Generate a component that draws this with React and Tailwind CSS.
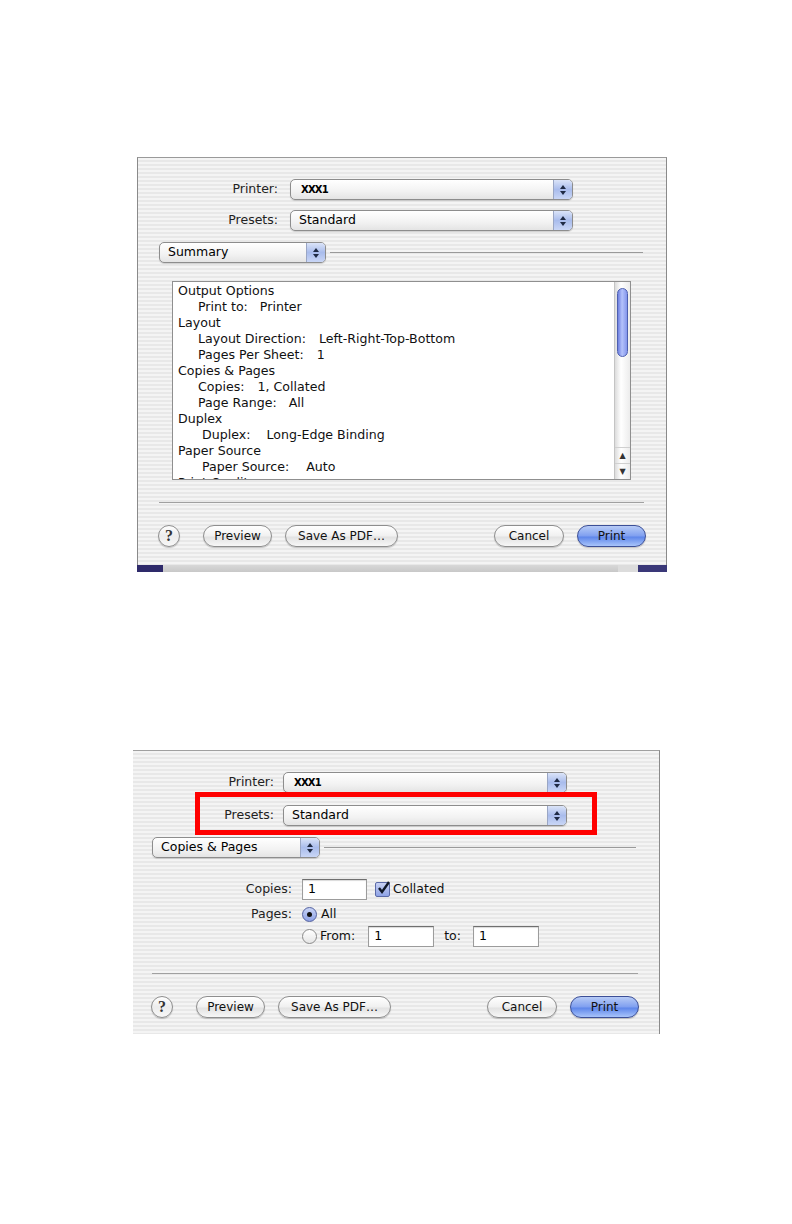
import React from "react";

const font = { fontFamily: '"DejaVu Sans", "Liberation Sans", sans-serif' };

const stripes =
  "bg-[image:repeating-linear-gradient(to_bottom,#f4f4f4_0px,#f4f4f4_2px,#e8e8e8_2px,#e8e8e8_4px)]";

const Arrows = ({ className = "" }) => (
  <svg width="8" height="12" viewBox="0 0 8 12" className={className}>
    <path d="M4 1 L7 5 L1 5 Z" fill="#1f2a44" />
    <path d="M1 7 L7 7 L4 11 Z" fill="#1f2a44" />
  </svg>
);

const Popup = ({ value, width, bold }) => (
  <div
    className="flex h-[21px] items-stretch rounded-[5px] border border-[#8d8d8d] bg-[linear-gradient(to_bottom,#ffffff,#f2f2f2_60%,#e4e4e4)] shadow-[0_1px_1px_rgba(0,0,0,0.15)]"
    style={{ width }}
  >
    <div
      className={`flex flex-1 items-center pl-[8px] text-black ${bold ? "text-[10px] font-bold tracking-[-0.8px] pl-[10px]" : "text-[12.5px]"}`}
    >
      {value}
    </div>
    <div className="flex w-[19px] items-center justify-center rounded-r-[4px] border-l border-[#9aa6c4] bg-[linear-gradient(to_bottom,#dbe4f8,#a9bcec_50%,#c9d6f6)]">
      <Arrows />
    </div>
  </div>
);

const Button = ({ children, width, primary }) => (
  <div
    className={`flex h-[22px] items-center justify-center rounded-full border text-[12px] text-[#111] shadow-[0_1px_1px_rgba(0,0,0,0.2)] ${
      primary
        ? "border-[#3c4f97] bg-[linear-gradient(to_bottom,#b7cbf6,#7f9ff0_50%,#5e86ea_55%,#a8c4fa)]"
        : "border-[#8e8e8e] bg-[linear-gradient(to_bottom,#ffffff,#f0f0f0_50%,#e2e2e2_55%,#f7f7f7)]"
    }`}
    style={{ width }}
  >
    {children}
  </div>
);

const Help = () => (
  <div className="flex h-[22px] w-[22px] items-center justify-center rounded-full border border-[#8e8e8e] bg-[linear-gradient(to_bottom,#ffffff,#ececec_50%,#f8f8f8)] text-[16px] font-bold text-[#333] shadow-[0_1px_1px_rgba(0,0,0,0.2)]" style={{ fontFamily: '"Liberation Serif", serif' }}>
    ?
  </div>
);

const ButtonRow = ({ left }) => (
  <div className="flex items-center" style={{ paddingLeft: left }}>
    <Help />
    <div className="ml-[23px]">
      <Button width={69}>Preview</Button>
    </div>
    <div className="ml-[13px]">
      <Button width={113}>Save As PDF…</Button>
    </div>
    <div className="ml-[96px]">
      <Button width={70}>Cancel</Button>
    </div>
    <div className="ml-[13px]">
      <Button width={69} primary>
        Print
      </Button>
    </div>
  </div>
);

const Label = ({ children, width }) => (
  <div className="text-right text-[12.5px] text-[#222]" style={{ width }}>
    {children}
  </div>
);

const Line = ({ head, children, indent = 20, label, gap = 12 }) =>
  head ? (
    <div className="h-[16px] leading-[16px]">{children}</div>
  ) : (
    <div className="h-[16px] leading-[16px]" style={{ paddingLeft: indent }}>
      {label}
      <span style={{ marginLeft: gap }}>{children}</span>
    </div>
  );

const Scrollbar = () => (
  <div className="flex w-[16px] flex-col border-l border-[#c4c4c4] bg-[linear-gradient(to_right,#dcdcdc,#ffffff_40%,#ececec)]">
    <div className="mx-auto mt-[6px] h-[69px] w-[11px] rounded-full border border-[#4d5fb0] bg-[linear-gradient(to_right,#6e80e0,#b4c2fb_45%,#8496ec)]" />
    <div className="flex-1" />
    <div className="flex h-[16px] items-center justify-center border-t border-[#d0d0d0] text-[8px] text-[#333]">▲</div>
    <div className="flex h-[16px] items-center justify-center border-t border-[#d0d0d0] text-[8px] text-[#333]">▼</div>
  </div>
);

const Checkbox = () => (
  <div className="relative h-[15px] w-[15px] rounded-[2px] border border-[#5b6aa8] bg-[linear-gradient(to_bottom,#c8d2f4,#8fa3e6)]">
    <svg width="15" height="15" viewBox="0 0 15 15" className="absolute left-[0px] top-[-2px]">
      <path d="M3 7 L6 11 L13 1" stroke="#101828" strokeWidth="2.4" fill="none" />
    </svg>
  </div>
);

const Radio = ({ on }) => (
  <div
    className={`flex h-[15px] w-[15px] items-center justify-center rounded-full border ${
      on
        ? "border-[#52609f] bg-[linear-gradient(to_bottom,#c9d4f6,#8ea2e5)]"
        : "border-[#8a8a8a] bg-[linear-gradient(to_bottom,#ffffff,#e6e6e6)]"
    }`}
  >
    {on && <div className="h-[5px] w-[5px] rounded-full bg-[#111]" />}
  </div>
);

const Field = ({ value, width }) => (
  <div
    className="flex h-[21px] items-center border border-[#9c9c9c] border-t-[#6f6f6f] bg-white pl-[5px] text-[12.5px] shadow-[inset_0_1px_1px_rgba(0,0,0,0.15)]"
    style={{ width }}
  >
    {value}
  </div>
);

const SummaryDialog = () => (
  <div className="ml-[137px] w-[530px]">
    <div className={`h-[408px] border-x border-t border-[#8a8a8a] border-t-[#9a9a9a] ${stripes}`}>
      <div className="mt-[21px] flex items-center">
        <Label width={140}>Printer:</Label>
        <div className="ml-[12px]">
          <Popup value="XXX1" width={283} bold />
        </div>
      </div>
      <div className="mt-[10px] flex items-center">
        <Label width={140}>Presets:</Label>
        <div className="ml-[12px]">
          <Popup value="Standard" width={283} />
        </div>
      </div>
      <div className="mt-[11px] flex items-center pl-[21px]">
        <Popup value="Summary" width={167} />
        <div className="ml-[4px] h-px w-[313px] bg-[#9a9a9a]" />
      </div>
      <div className="ml-[34px] mt-[18px] flex h-[199px] w-[459px] border border-[#8f8f8f] bg-white">
        <div className="flex-1 overflow-hidden pl-[5px] pt-[1px] text-[12.6px] text-[#111]">
          <Line head>Output Options</Line>
          <Line label="Print to:">Printer</Line>
          <Line head>Layout</Line>
          <Line label="Layout Direction:" gap={13}>Left-Right-Top-Bottom</Line>
          <Line label="Pages Per Sheet:" gap={13}>1</Line>
          <Line head>Copies &amp; Pages</Line>
          <Line label="Copies:" gap={13}>1, Collated</Line>
          <Line label="Page Range:" gap={12}>All</Line>
          <Line head>Duplex</Line>
          <Line label="Duplex:" indent={24} gap={16}>Long-Edge Binding</Line>
          <Line head>Paper Source</Line>
          <Line label="Paper Source:" indent={24} gap={17}>Auto</Line>
          <Line head>Print Quality</Line>
        </div>
        <Scrollbar />
      </div>
      <div className="ml-[21px] mt-[22px] h-px w-[485px] bg-[#a0a0a0]" />
      <div className="mt-[22px]">
        <ButtonRow left={20} />
      </div>
    </div>
    <div className="flex h-[7px]">
      <div className="w-[26px] bg-[#2e2a6a]" />
      <div className="flex-1 bg-[linear-gradient(to_bottom,#d8d8d8,#c8c8c8)]" />
      <div className="w-[20px] bg-[#dcdcdc]" />
      <div className="w-[29px] bg-[#3a3878]" />
    </div>
  </div>
);

const CopiesDialog = () => (
  <div className={`relative ml-[133px] mt-[178px] h-[284px] w-[527px] border-r border-t border-[#8a8a8a] border-t-[#a0a0a0] ${stripes}`}>
    <div className="mt-[21px] flex items-center">
      <Label width={141}>Printer:</Label>
      <div className="ml-[9px]">
        <Popup value="XXX1" width={284} bold />
      </div>
    </div>
    <div className="mt-[12px] flex items-center">
      <Label width={141}>Presets:</Label>
      <div className="ml-[9px]">
        <Popup value="Standard" width={284} />
      </div>
    </div>
    <div className="mt-[11px] flex items-center pl-[19px]">
      <Popup value="Copies & Pages" width={168} />
      <div className="ml-[4px] h-px w-[312px] bg-[#9a9a9a]" />
    </div>
    <div className="mt-[21px] flex items-center">
      <Label width={159}>Copies:</Label>
      <div className="ml-[10px]">
        <Field value="1" width={65} />
      </div>
      <div className="ml-[8px]">
        <Checkbox />
      </div>
      <div className="ml-[3px] text-[12.5px] text-[#111]">Collated</div>
    </div>
    <div className="mt-[5px] flex items-center">
      <Label width={159}>Pages:</Label>
      <div className="ml-[10px]">
        <Radio on />
      </div>
      <div className="ml-[4px] text-[12.5px] text-[#111]">All</div>
    </div>
    <div className="mt-[2px] flex items-center pl-[169px]">
      <Radio />
      <div className="ml-[3px] text-[12.5px] text-[#111]">From:</div>
      <div className="ml-[13px]">
        <Field value="1" width={66} />
      </div>
      <div className="ml-[10px] text-[12.5px] text-[#111]">to:</div>
      <div className="ml-[12px]">
        <Field value="1" width={66} />
      </div>
    </div>
    <div className="ml-[19px] mt-[26px] h-px w-[486px] bg-[#a0a0a0]" />
    <div className="mt-[22px]">
      <ButtonRow left={18} />
    </div>
    <div className="absolute left-[62px] top-[41px] h-[43px] w-[402px] border-[5px] border-[#ff0000]" />
  </div>
);

export default function App() {
  return (
    <div className="min-h-[1224px] w-[792px] bg-white pt-[157px]" style={font}>
      <SummaryDialog />
      <CopiesDialog />
    </div>
  );
}
